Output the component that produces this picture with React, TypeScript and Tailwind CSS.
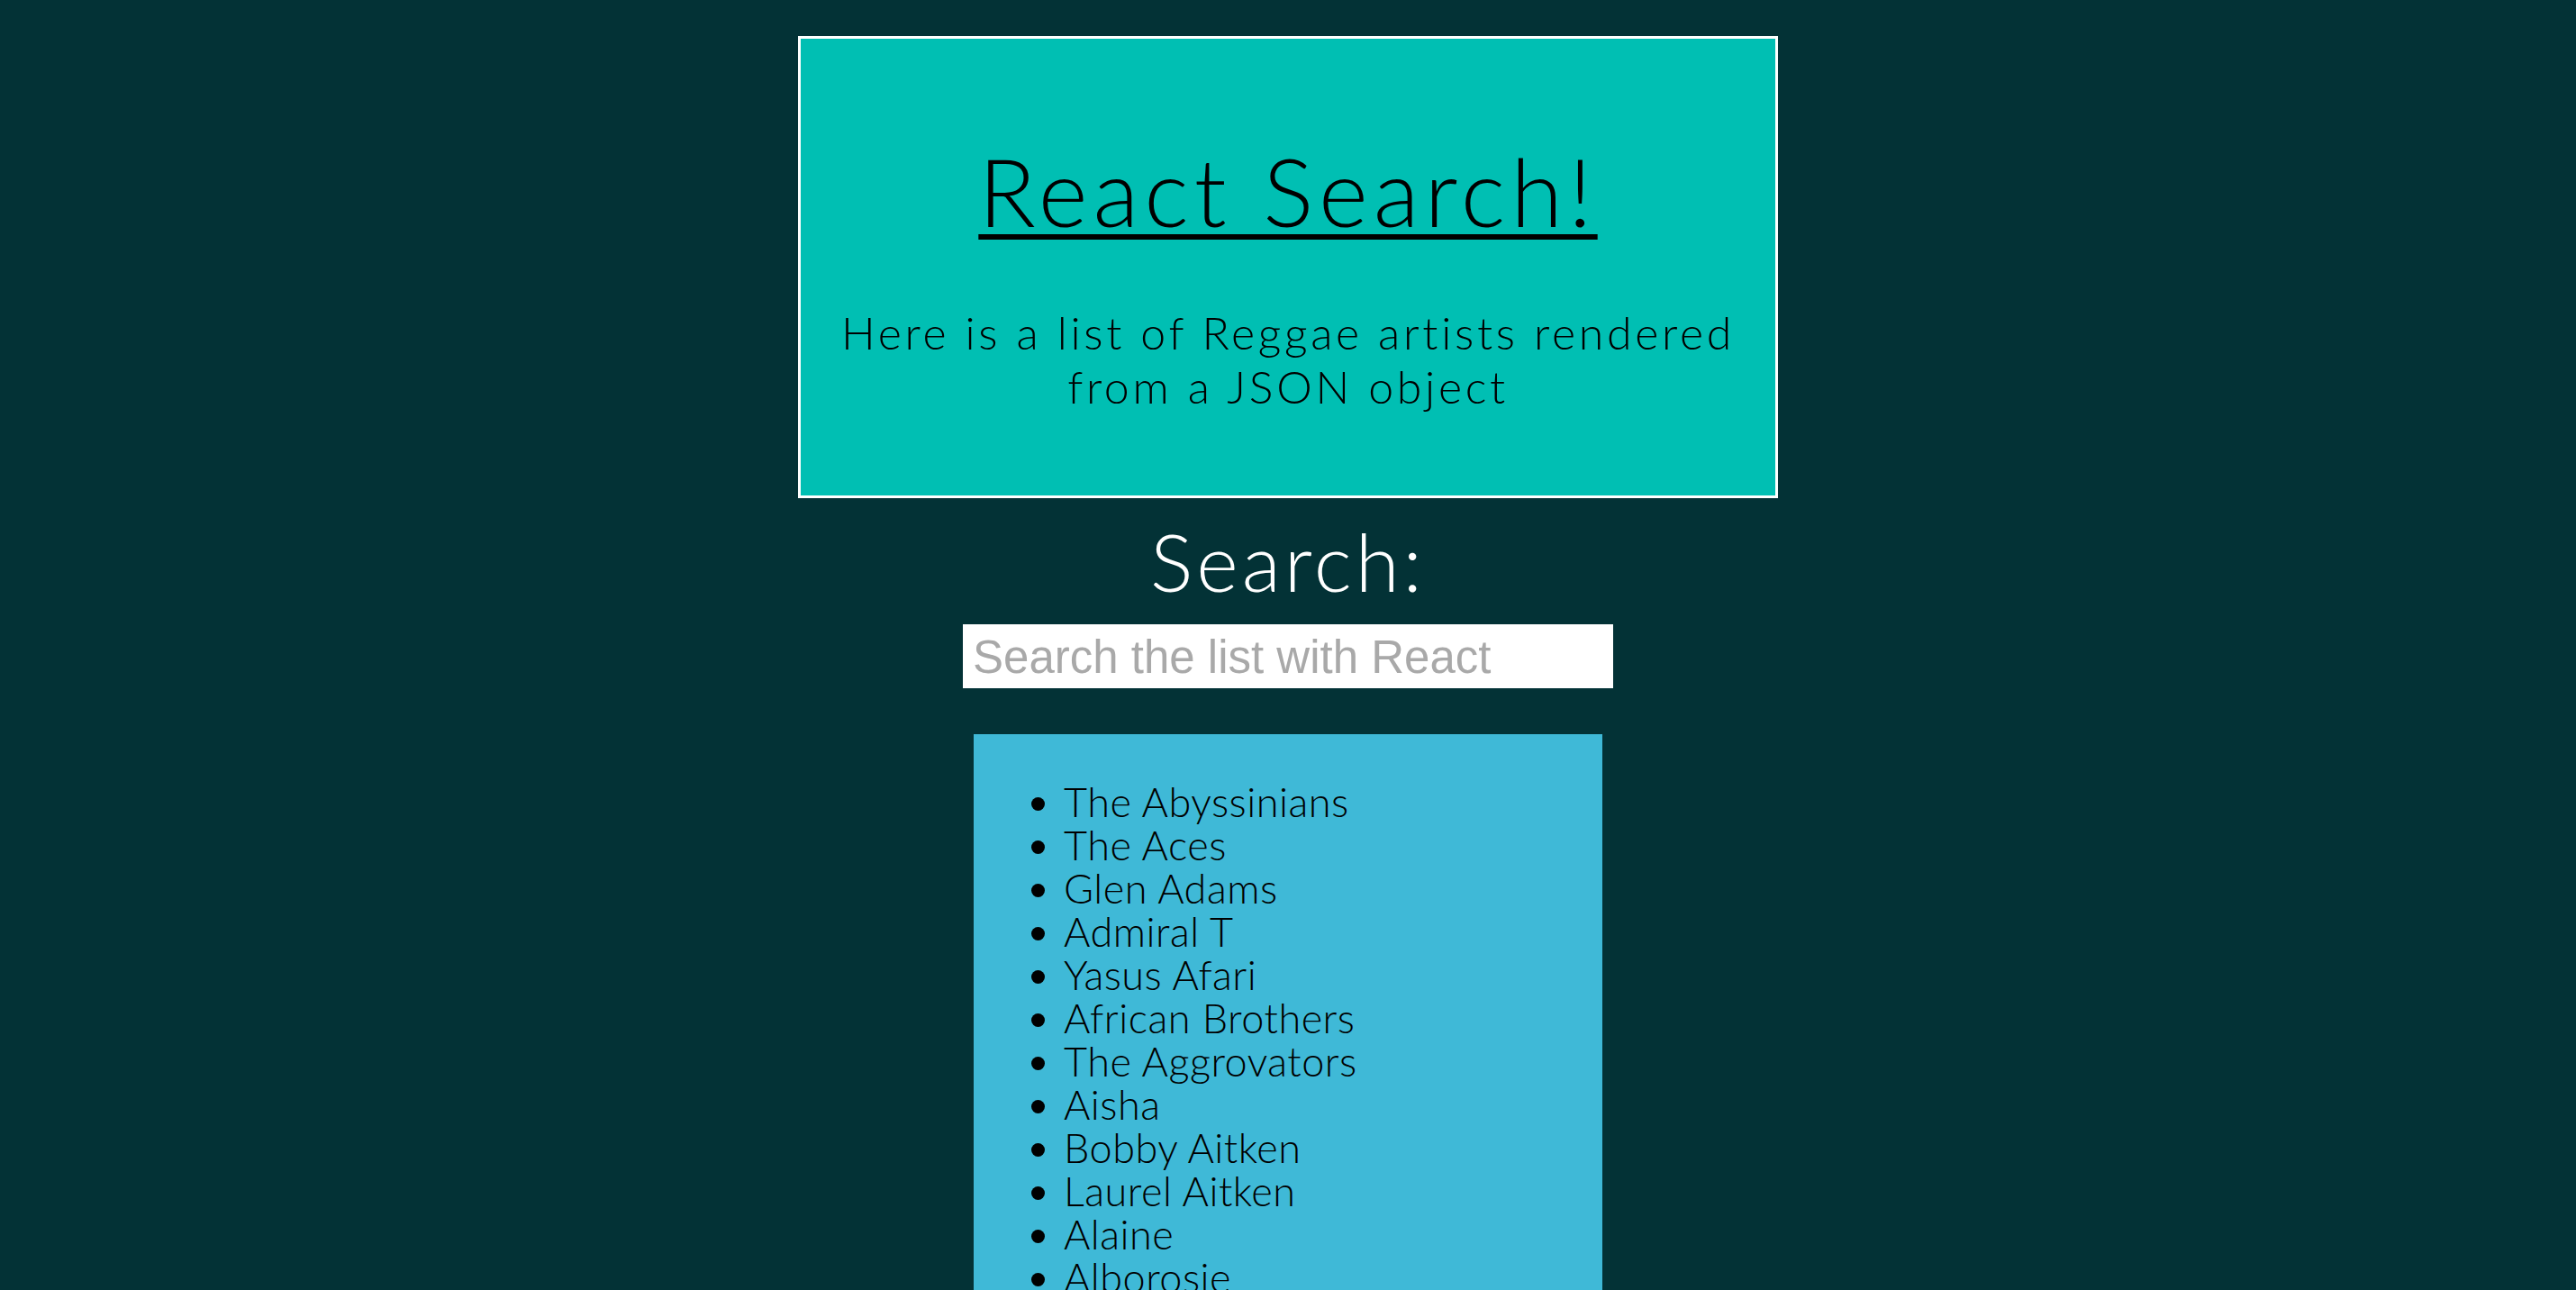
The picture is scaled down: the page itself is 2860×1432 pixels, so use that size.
const artists = [
  "The Abyssinians",
  "The Aces",
  "Glen Adams",
  "Admiral T",
  "Yasus Afari",
  "African Brothers",
  "The Aggrovators",
  "Aisha",
  "Bobby Aitken",
  "Laurel Aitken",
  "Alaine",
  "Alborosie",
  "Dennis Alcapone",
  "Alpha Blondy",
  "Roland Alphonso",
];

const App = () => {
  return (
    <div className="min-h-screen w-full bg-[#033236] pt-[40px] font-['Lato',_'Open_Sans',_sans-serif] font-light">
      <div className="mx-auto flex w-[1088px] flex-col items-center border-[3px] border-white bg-[#00bfb3] px-[28px] pt-[116px] pb-[91px] text-black">
        <h1 className="text-[105px] leading-none tracking-[6px] underline decoration-[6px] underline-offset-[8px]">
          React Search!
        </h1>
        <p className="mt-[75px] max-w-[1020px] text-center text-[50px] leading-[60px] tracking-[3.7px]">
          Here is a list of Reggae artists rendered from a JSON object
        </p>
      </div>

      <div className="mt-[25px] text-center text-[89px] leading-none tracking-[4px] text-white">
        Search:
      </div>

      <div className="mt-[26px] flex justify-center">
        <input
          type="text"
          placeholder="Search the list with React"
          className="h-[71px] w-[722px] bg-white px-[11px] pt-[3px] font-['Liberation_Sans',_Arial,_sans-serif] text-[51px] font-normal text-black outline-none placeholder:text-[#a9a9a9]"
        />
      </div>

      <div className="mx-auto mt-[51px] w-[698px] bg-[#3fb9d7] pt-[51px] pb-[40px]">
        <ul className="list-disc pl-[100px] text-[45px] leading-[48px] tracking-[0.5px] text-black">
          {artists.map((name) => (
            <li key={name}>{name}</li>
          ))}
        </ul>
      </div>
    </div>
  );
};

export default App;
